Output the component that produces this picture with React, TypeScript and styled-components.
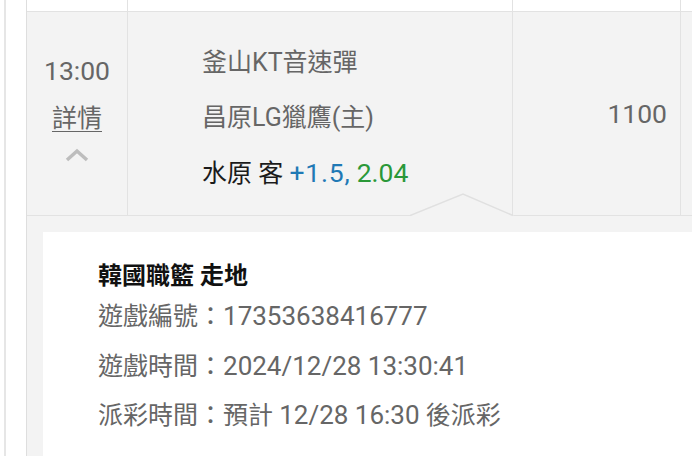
import React from "react";
import styled, { createGlobalStyle } from "styled-components";

const GlobalStyle = createGlobalStyle`
  html, body {
    margin: 0;
    padding: 0;
    background: #fff;
    overflow: hidden;
  }
  body {
    font-family: Roboto, "Noto Sans CJK TC", "Noto Sans", sans-serif;
  }
`;

const Page = styled.div`
  width: 692px;
  height: 456px;
  padding-left: 4px;
  box-sizing: border-box;
  display: flex;
`;

const Sheet = styled.div`
  flex: 1;
  border-left: 2px solid #e6e6e6;
  padding-left: 20px;
  display: flex;
`;

const Card = styled.div`
  flex: 1;
  border-left: 1px solid #dedede;
  display: flex;
  flex-direction: column;
`;

const Row = styled.div<{ $height: number; $bg: string }>`
  display: grid;
  grid-template-columns: 101px 385px 168px 1fr;
  height: ${(p) => p.$height}px;
  background: ${(p) => p.$bg};
  border-bottom: 1px solid #e2e2e2;
  box-sizing: border-box;
`;

const Cell = styled.div<{ $align?: string }>`
  border-right: 1px solid #e2e2e2;
  display: flex;
  flex-direction: column;
  align-items: ${(p) => p.$align || "stretch"};
  font-size: 25px;
  color: #666;
`;

// latin digits render a touch larger than the CJK glyphs in the source
const Num = styled.span<{ $scale?: number }>`
  font-size: ${(p) => p.$scale || 1.06}em;
`;

const TimeCell = styled(Cell)`
  padding-top: 35px;
  align-items: center;
`;

const TimeText = styled.div`
  line-height: 47px;
`;

const DetailLink = styled.a`
  line-height: 47px;
  color: #666;
  text-decoration: underline;
  text-underline-offset: 4px;
  text-decoration-thickness: 1px;
`;

const Caret = styled.svg`
  margin-top: 6px;
`;

const TeamCell = styled(Cell)`
  padding-top: 23px;
  padding-left: 74px;
`;

const TeamLine = styled.div<{ $dark?: boolean }>`
  line-height: 55px;
  color: ${(p) => (p.$dark ? "#1b1b1b" : "#666")};
  white-space: nowrap;
`;

const Handicap = styled.span`
  color: #1f79b5;
  letter-spacing: 0.8px;
`;

const Odds = styled.span`
  color: #2a9838;
`;

const AmountCell = styled(Cell)`
  justify-content: center;
  align-items: flex-end;
  padding-right: 13px;
`;

const Detail = styled.div`
  position: relative;
  flex: 1;
  background: #f3f3f3;
  padding: 16px 0 0 16px;
  display: flex;
`;

const Pointer = styled.svg`
  position: absolute;
  left: 383px;
  top: -23px;
`;

const DetailBox = styled.div`
  flex: 1;
  background: #fff;
  padding: 28px 0 0 55px;
`;

const DetailTitle = styled.div`
  font-size: 24px;
  font-weight: 700;
  line-height: 32px;
  color: #111;
`;

const InfoLine = styled.div`
  font-size: 25px;
  line-height: 48.5px;
  color: #666;
  white-space: nowrap;
`;

export default function App() {
  return (
    <>
      <GlobalStyle />
      <Page>
        <Sheet>
          <Card>
            <Row $height={12} $bg="#fff">
              <Cell />
              <Cell />
              <Cell />
              <div />
            </Row>
            <Row $height={204} $bg="#f3f3f3">
              <TimeCell>
                <TimeText>
                  <Num>13:00</Num>
                </TimeText>
                <DetailLink>詳情</DetailLink>
                <Caret width="24" height="14" viewBox="0 0 24 14">
                  <polyline
                    points="2,12 12,3 22,12"
                    fill="none"
                    stroke="#bdbdbd"
                    strokeWidth="3.5"
                  />
                </Caret>
              </TimeCell>
              <TeamCell>
                <TeamLine>釜山KT音速彈</TeamLine>
                <TeamLine>昌原LG獵鷹(主)</TeamLine>
                <TeamLine $dark>
                  水原 客{" "}
                  <Handicap>
                    <Num>+1.5,</Num>
                  </Handicap>{" "}
                  <Odds>
                    <Num>2.04</Num>
                  </Odds>
                </TeamLine>
              </TeamCell>
              <AmountCell>
                <Num>1100</Num>
              </AmountCell>
              <div />
            </Row>
            <Detail>
              <Pointer width="104" height="24" viewBox="0 0 104 24">
                <polygon points="0,23 53,1 104,23" fill="#f3f3f3" />
                <polyline
                  points="0,22.5 53,1 103,22.5"
                  fill="none"
                  stroke="#e0e0e0"
                  strokeWidth="1.5"
                />
              </Pointer>
              <DetailBox>
                <DetailTitle>韓國職籃 走地</DetailTitle>
                <InfoLine>
                  遊戲編號：<Num $scale={1.04}>17353638416777</Num>
                </InfoLine>
                <InfoLine>
                  遊戲時間：<Num $scale={1.04}>2024/12/28 13:30:41</Num>
                </InfoLine>
                <InfoLine>
                  派彩時間：預計 <Num $scale={1.04}>12/28 16:30</Num> 後派彩
                </InfoLine>
              </DetailBox>
            </Detail>
          </Card>
        </Sheet>
      </Page>
    </>
  );
}
